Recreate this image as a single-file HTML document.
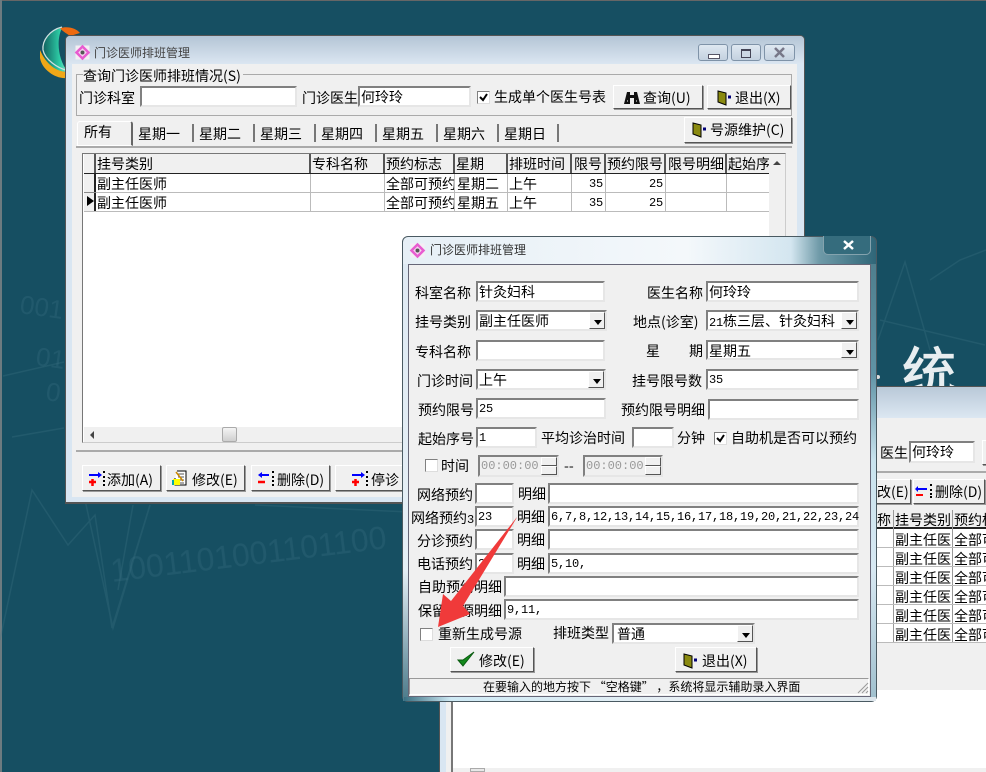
<!DOCTYPE html>
<html><head><meta charset="utf-8"><style>
html,body{margin:0;padding:0}
#r{position:relative;width:986px;height:772px;overflow:hidden;background:#164f62;font:14px/16px "WenQuanYi Zen Hei","Noto Sans CJK SC",sans-serif;color:#000}
#r div,#r svg.a,#r span.t{position:absolute}
.t{white-space:nowrap;font:14px/16px "WenQuanYi Zen Hei","Noto Sans CJK SC",sans-serif}
.m{font:12px/16px "Liberation Mono",monospace;letter-spacing:-.2px}
.i{box-sizing:border-box;background:#fff;border:2px solid;border-color:#808080 #e6e6e6 #e6e6e6 #808080}
.i span{position:absolute;left:1px;top:1px;white-space:nowrap}
.c{position:absolute;right:0;top:0;bottom:0;width:16px;background:#f0f0f0;border:1px solid;border-color:#fff #555 #555 #fff;box-sizing:border-box}
.c:after{content:"";position:absolute;left:4px;top:7px;border:4px solid transparent;border-top:5px solid #000;border-bottom:0}
.b{box-sizing:border-box;background:#f0f0f0;border:1px solid;border-color:#fff #555 #555 #fff;box-shadow:1px 1px 0 #999}
.k{box-sizing:border-box;background:#fff;border:1px solid;border-color:#808080 #ddd #ddd #808080;width:13px;height:13px}
.h{background:#f0f0f0;border-right:2px solid #555;box-sizing:border-box;height:19px;top:154px;overflow:hidden}
</style></head><body><div id="r">
<div style="left:0;top:0;width:986px;height:1px;background:#666"></div>
<div style="left:0;top:0;width:2px;height:772px;background:#6d7b80"></div>

<svg class="a" style="left:0;top:0" width="986" height="772" fill="none">
<defs><linearGradient id="lg" x1="0" x2="1"><stop offset="0" stop-color="#0e5c5c"/><stop offset=".7" stop-color="#2fd0a8"/><stop offset="1" stop-color="#8fe0c8"/></linearGradient></defs>
<g stroke="#3f7486" stroke-width="1.5" opacity=".3">
<path d="M3 376L64 362M12 437L64 428"/>
<path d="M0 640L32 490L68 545L95 515L112 628L150 505"/>
<path d="M85 500L113 628L150 505M133 505L118 590"/>
<path d="M255 505L410 512"/>
<path d="M878 340L905 262L930 350M880 320L985 345M930 280L960 260L986 250"/>
</g>
<g fill="#3f7486" opacity=".3" font-family="Liberation Sans" font-size="26">
<text x="19" y="313" transform="rotate(8 19 313)">001</text>
<text x="35" y="365" transform="rotate(8 35 365)">01</text>
<text x="45" y="400" transform="rotate(8 45 400)">0</text>
<text x="112" y="582" transform="rotate(-7 112 582)" font-size="32">1001101001101100</text>
</g>
<path d="M44 58C38 44 48 30 62 28C56 40 58 60 68 72C56 72 48 66 44 58Z" fill="url(#lg)"/>
<path d="M40 58C42 70 56 79 66 78L68 72C56 72 46 64 40 50Z" fill="#f0a818"/>
<path d="M60 28C68 26 76 28 80 33L70 36C66 33 62 31 60 28Z" fill="#ee6a10"/>
<path d="M62 27C50 30 42 40 43 50C45 60 58 68 66 70" stroke="#cfe0e0" stroke-width="1.3"/>
<circle cx="878" cy="377" r="2" fill="#ddd"/>
<text x="902" y="392" fill="#e8eef0" stroke="#e8eef0" stroke-width="1" font-size="54" font-family="WenQuanYi Zen Hei,Noto Sans CJK SC,sans-serif">统</text>
</svg>

<!-- back window -->
<div style="left:439px;top:386px;width:560px;height:386px;background:#d9e6f2;border-left:1px solid #555;border-top:1px solid #555;box-sizing:border-box"></div>
<div style="left:440px;top:387px;width:546px;height:31px;background:linear-gradient(#b9c9d8,#dce7f2)"></div>
<div style="left:446px;top:418px;width:540px;height:354px;background:#f0f0f0"></div>
<div style="left:451px;top:690px;width:535px;height:82px;background:#fff;border-left:2px solid #777;box-sizing:border-box"></div>
<div style="left:453px;top:768px;width:533px;height:4px;background:#f0f0f0"></div>
<div style="left:470px;top:768px;width:15px;height:4px;background:#e8e8e8;border:1px solid #aaa;box-sizing:border-box"></div>
<span class="t" style="left:880px;top:445px">医生</span>
<div class="i" style="left:909px;top:441px;width:66px;height:22px"><span>何玲玲</span></div>
<div class="b" style="left:982px;top:440px;width:10px;height:25px"></div>
<div style="left:877px;top:471px;width:109px;height:2px;background:#aaa"></div>
<div class="b" style="left:860px;top:479px;width:51px;height:25px"></div>
<span class="t" style="left:877px;top:484px;background:#f0f0f0">改(E)</span>
<div class="b" style="left:913px;top:479px;width:72px;height:25px"></div>
<svg class="a" style="left:915px;top:483px" width="20" height="16"><path d="M2 6H12" stroke="#00f" stroke-width="2"/><path d="M1 12H8" stroke="#f00" stroke-width="2"/><path d="M3 3L0 6L3 9Z" fill="#00f"/><path d="M15 2h2M15 7h2M15 11h2M15 14h2" stroke="#000" stroke-width="2"/></svg>
<span class="t" style="left:935px;top:484px">删除(D)</span>
<div style="left:877px;top:510px;width:109px;height:133px;background:#fff"></div>
<div style="left:877px;top:510px;width:109px;height:19px;background:#f0f0f0;border-bottom:2px solid #222;box-sizing:border-box"></div>
<div style="left:893px;top:510px;width:1px;height:132px;background:#999"></div>
<div style="left:952px;top:510px;width:1px;height:132px;background:#999"></div>
<div style="left:877px;top:547px;width:109px;height:1px;background:#bbb"></div>
<div style="left:877px;top:566px;width:109px;height:1px;background:#bbb"></div>
<div style="left:877px;top:585px;width:109px;height:1px;background:#bbb"></div>
<div style="left:877px;top:604px;width:109px;height:1px;background:#bbb"></div>
<div style="left:877px;top:623px;width:109px;height:1px;background:#bbb"></div>
<div style="left:877px;top:642px;width:109px;height:1px;background:#bbb"></div>
<span class="t" style="left:877px;top:512px">称</span><span class="t" style="left:895px;top:512px">挂号类别</span><span class="t" style="left:954px;top:512px">预约标</span>
<span class="t" style="left:895px;top:532px">副主任医</span><span class="t" style="left:954px;top:532px">全部可</span>
<span class="t" style="left:895px;top:551px">副主任医</span><span class="t" style="left:954px;top:551px">全部可</span>
<span class="t" style="left:895px;top:570px">副主任医</span><span class="t" style="left:954px;top:570px">全部可</span>
<span class="t" style="left:895px;top:589px">副主任医</span><span class="t" style="left:954px;top:589px">全部可</span>
<span class="t" style="left:895px;top:608px">副主任医</span><span class="t" style="left:954px;top:608px">全部可</span>
<span class="t" style="left:895px;top:627px">副主任医</span><span class="t" style="left:954px;top:627px">全部可</span>

<!-- main window -->
<div style="left:65px;top:35px;width:740px;height:469px;background:#d9e6f2;border:1px solid #555;border-bottom-width:2px;border-radius:5px 5px 0 0;box-sizing:border-box"></div>
<div style="left:66px;top:36px;width:738px;height:28px;border-radius:4px 4px 0 0;background:linear-gradient(#b4c5d6,#dbe6f1)"></div>
<div style="left:72px;top:64px;width:725px;height:433px;background:#f0f0f0"></div>
<svg class="a" style="left:74px;top:44px" width="17" height="17"><rect x="1.500" y="1.500" width="14" height="14" fill="#f4eef4"/><rect x="3" y="3" width="11" height="11" transform="rotate(45 8.500 8.500)" fill="#e85cd0"/><rect x="5.500" y="5.500" width="6" height="6" transform="rotate(45 8.500 8.500)" fill="#f6d6f0"/><circle cx="8.500" cy="8.500" r="2" fill="#555"/></svg>
<span class="t" style="left:94px;top:45px;font-size:12px;color:#444">门诊医师排班管理</span>
<div style="left:698px;top:44px;width:30px;height:17px;box-sizing:border-box;border:1px solid #7f93a8;border-radius:3px;background:linear-gradient(#dfe8f1,#c3d1df)"></div>
<div style="left:731px;top:44px;width:30px;height:17px;box-sizing:border-box;border:1px solid #7f93a8;border-radius:3px;background:linear-gradient(#dfe8f1,#c3d1df)"></div>
<div style="left:764px;top:44px;width:31px;height:17px;box-sizing:border-box;border:1px solid #7f93a8;border-radius:3px;background:linear-gradient(#dfe8f1,#c3d1df)"></div>
<div style="left:708px;top:54px;width:10px;height:3px;background:#fff;border:1px solid #556"></div>
<div style="left:741px;top:49px;width:8px;height:6px;background:#cdd8e4;border:1px solid #445;border-top-width:2px"></div>
<svg class="a" style="left:774px;top:47px" width="12" height="11"><path d="M1 1L10 10M10 1L1 10" stroke="#778" stroke-width="2.500"/></svg>

<div style="left:76px;top:74px;width:716px;height:42px;border:1px solid #aaa;box-sizing:border-box"></div>
<span class="t" style="left:83px;top:68px;background:#f0f0f0;padding-right:2px">查询门诊医师排班情况(S)</span>
<span class="t" style="left:79px;top:90px">门诊科室</span>
<div class="i" style="left:140px;top:86px;width:157px;height:21px"></div>
<span class="t" style="left:302px;top:90px">门诊医生</span>
<div class="i" style="left:358px;top:86px;width:113px;height:21px"><span>何玲玲</span></div>
<div class="k" style="left:477px;top:91px"></div>
<svg class="a" style="left:479px;top:93px" width="10" height="10"><path d="M1 4L4 7L8 1" stroke="#000" stroke-width="2" fill="none"/></svg>
<span class="t" style="left:494px;top:89px">生成单个医生号表</span>
<div class="b" style="left:613px;top:85px;width:90px;height:24px"></div>
<svg class="a" style="left:624px;top:91px" width="16" height="14"><path d="M3 1h3v3h4V1h3l3 12H10V7H6v6H0Z" fill="#111"/><path d="M3 10h1M12 10h1" stroke="#fff"/></svg>
<span class="t" style="left:643px;top:90px">查询(U)</span>
<div class="b" style="left:707px;top:85px;width:84px;height:24px"></div>
<svg class="a" style="left:717px;top:90px" width="16" height="16"><path d="M1 1L9 3V15L1 12Z" fill="#8a8a10" stroke="#000"/><path d="M11 7h3" stroke="#007" stroke-width="3"/></svg>
<span class="t" style="left:735px;top:90px">退出(X)</span>

<!-- tabs -->
<div style="left:76px;top:146px;width:716px;height:2px;background:#aaa"></div>
<div style="left:77px;top:121px;width:56px;height:25px;background:#f0f0f0;border:1px solid #fff;border-right:2px solid #666;box-sizing:border-box;border-radius:3px 3px 0 0"></div>
<span class="t" style="left:84px;top:124px">所有</span>
<span class="t" style="left:138px;top:126px">星期一</span><span class="t" style="left:199px;top:126px">星期二</span><span class="t" style="left:260px;top:126px">星期三</span><span class="t" style="left:321px;top:126px">星期四</span><span class="t" style="left:382px;top:126px">星期五</span><span class="t" style="left:443px;top:126px">星期六</span><span class="t" style="left:504px;top:126px">星期日</span>
<div style="left:192px;top:124px;width:2px;height:18px;background:#777"></div><div style="left:253px;top:124px;width:2px;height:18px;background:#777"></div><div style="left:314px;top:124px;width:2px;height:18px;background:#777"></div><div style="left:375px;top:124px;width:2px;height:18px;background:#777"></div><div style="left:436px;top:124px;width:2px;height:18px;background:#777"></div><div style="left:497px;top:124px;width:2px;height:18px;background:#777"></div><div style="left:557px;top:124px;width:2px;height:18px;background:#777"></div>
<div class="b" style="left:684px;top:117px;width:108px;height:26px"></div>
<svg class="a" style="left:692px;top:122px" width="16" height="16"><path d="M1 1L9 3V15L1 12Z" fill="#8a8a10" stroke="#000"/><path d="M11 7h3" stroke="#007" stroke-width="3"/></svg>
<span class="t" style="left:710px;top:122px">号源维护(C)</span>

<!-- grid -->
<div style="left:82px;top:153px;width:704px;height:290px;background:#fff;border:1px solid;border-color:#777 #ccc #ccc #777;box-sizing:border-box"></div>
<div class="h" style="left:84px;width:12px"></div>
<div class="h" style="left:96px;width:215px"><span class="t" style="left:1px;top:2px">挂号类别</span></div>
<div class="h" style="left:311px;width:74px"><span class="t" style="left:1px;top:2px">专科名称</span></div>
<div class="h" style="left:385px;width:70px"><span class="t" style="left:1px;top:2px">预约标志</span></div>
<div class="h" style="left:455px;width:53px"><span class="t" style="left:1px;top:2px">星期</span></div>
<div class="h" style="left:508px;width:64px"><span class="t" style="left:1px;top:2px">排班时间</span></div>
<div class="h" style="left:572px;width:34px"><span class="t" style="left:2px;top:2px">限号</span></div>
<div class="h" style="left:606px;width:60px"><span class="t" style="left:1px;top:2px">预约限号</span></div>
<div class="h" style="left:666px;width:61px"><span class="t" style="left:2px;top:2px">限号明细</span></div>
<div class="h" style="left:727px;width:42px;border-right:0"><span class="t" style="left:1px;top:2px">起始序</span></div>
<div style="left:84px;top:173px;width:685px;height:1px;background:#222"></div>
<div style="left:84px;top:174px;width:12px;height:37px;background:#f0f0f0;border-right:2px solid #222;box-sizing:border-box"></div>
<div style="left:84px;top:192px;width:12px;height:1px;background:#888"></div>
<div style="left:87px;top:196px;border:5px solid transparent;border-left:7px solid #000;border-right:0"></div>
<div style="left:96px;top:192px;width:673px;height:1px;background:#bbb"></div>
<div style="left:84px;top:211px;width:685px;height:1px;background:#bbb"></div>
<div style="left:310px;top:174px;width:1px;height:37px;background:#bbb"></div><div style="left:384px;top:174px;width:1px;height:37px;background:#bbb"></div><div style="left:454px;top:174px;width:1px;height:37px;background:#bbb"></div><div style="left:507px;top:174px;width:1px;height:37px;background:#bbb"></div><div style="left:571px;top:174px;width:1px;height:37px;background:#bbb"></div><div style="left:605px;top:174px;width:1px;height:37px;background:#bbb"></div><div style="left:665px;top:174px;width:1px;height:37px;background:#bbb"></div><div style="left:726px;top:174px;width:1px;height:37px;background:#bbb"></div>
<span class="t" style="left:97px;top:176px">副主任医师</span><span class="t" style="left:386px;top:176px;width:68px;overflow:hidden">全部可预约</span><span class="t" style="left:457px;top:176px">星期二</span><span class="t" style="left:509px;top:176px">上午</span><span class="t m" style="left:589px;top:176px">35</span><span class="t m" style="left:649px;top:176px">25</span>
<span class="t" style="left:97px;top:195px">副主任医师</span><span class="t" style="left:386px;top:195px;width:68px;overflow:hidden">全部可预约</span><span class="t" style="left:457px;top:195px">星期五</span><span class="t" style="left:509px;top:195px">上午</span><span class="t m" style="left:589px;top:195px">35</span><span class="t m" style="left:649px;top:195px">25</span>
<div style="left:769px;top:154px;width:16px;height:288px;background:#f0f0f0"></div>
<div style="left:773px;top:161px;border:4px solid transparent;border-bottom:4px solid #444;border-top:0"></div>
<div style="left:84px;top:427px;width:700px;height:15px;background:#f0f0f0"></div>
<div style="left:90px;top:431px;border:4px solid transparent;border-right:4px solid #444;border-left:0"></div>
<div style="left:222px;top:427px;width:15px;height:15px;box-sizing:border-box;border:1px solid #aaa;border-radius:2px;background:linear-gradient(#f4f4f4,#cfcfcf)"></div>
<div style="left:76px;top:450px;width:716px;height:2px;background:#aaa"></div>

<!-- toolbar -->
<div class="b" style="left:82px;top:465px;width:79px;height:26px"></div>
<svg class="a" style="left:88px;top:471px" width="18" height="16"><path d="M1 4H12" stroke="#00f" stroke-width="2"/><path d="M10 1L14 4L10 7Z" fill="#00f"/><path d="M1 11H8M4.500 8V15" stroke="#f00" stroke-width="2.500"/><path d="M15 1h2M15 6h2M15 10h2M15 14h2" stroke="#000" stroke-width="2"/></svg>
<span class="t" style="left:107px;top:472px">添加(A)</span>
<div class="b" style="left:166px;top:465px;width:79px;height:26px"></div>
<svg class="a" style="left:172px;top:470px" width="17" height="17"><path d="M5 1H14V15H3V8" fill="#fff" stroke="#000"/><path d="M6 4h6M6 7h6M6 10h6M6 13h6" stroke="#555"/><path d="M1 9h7v6H1Z" fill="#ff0"/><path d="M1 10v5" stroke="#0aa" stroke-width="2"/><path d="M4 2L11 11" stroke="#c80" stroke-width="1.500"/></svg>
<span class="t" style="left:192px;top:472px">修改(E)</span>
<div class="b" style="left:251px;top:465px;width:79px;height:26px"></div>
<svg class="a" style="left:257px;top:471px" width="18" height="16"><path d="M3 4H12" stroke="#00f" stroke-width="2"/><path d="M5 1L1 4L5 7Z" fill="#00f"/><path d="M1 11H8" stroke="#f00" stroke-width="2.500"/><path d="M15 1h2M15 6h2M15 10h2M15 14h2" stroke="#000" stroke-width="2"/></svg>
<span class="t" style="left:277px;top:472px">删除(D)</span>
<div class="b" style="left:335px;top:465px;width:79px;height:26px"></div>
<svg class="a" style="left:351px;top:471px" width="18" height="16"><path d="M1 4H12" stroke="#00f" stroke-width="2"/><path d="M10 1L14 4L10 7Z" fill="#00f"/><path d="M1 11H8M4.500 8V15" stroke="#f00" stroke-width="2.500"/><path d="M15 1h2M15 6h2M15 10h2M15 14h2" stroke="#000" stroke-width="2"/></svg>
<span class="t" style="left:371px;top:472px">停诊</span>

<!-- dialog -->
<div style="left:402px;top:236px;width:475px;height:466px;border:1px solid #4a5a62;border-radius:6px;box-sizing:border-box;background:linear-gradient(90deg,#e6eff6 0,#f4f8fb 60%,#d4e6f0 82%,#6f9aa8 88%,#2f6678 100%)"></div>
<div style="left:408px;top:264px;width:463px;height:433px;background:#f0f0f0;border:1px solid #667;box-sizing:border-box"></div>
<div style="left:871px;top:264px;width:5px;height:437px;background:linear-gradient(#4f7f8e,#5f93a5 25%,#c9e3ee 45%,#d7e8f2 70%,#9fbfcd)"></div>
<div style="left:403px;top:264px;width:5px;height:437px;background:linear-gradient(#dfeaf3,#e6eff6 70%,#4a7a8a)"></div>
<div style="left:404px;top:697px;width:472px;height:4px;background:linear-gradient(90deg,#3a7082,#cfeaf5 10%,#e8eff4 60%,#dde6ec)"></div>
<div style="left:823px;top:236px;width:48px;height:19px;box-sizing:border-box;border:1px solid #84a3ae;border-top:0;border-radius:0 0 5px 5px;background:#356c7d"></div>
<svg class="a" style="left:843px;top:240px" width="12" height="11"><path d="M1 1L10 9M10 1L1 9" stroke="#fff" stroke-width="2.500"/></svg>
<svg class="a" style="left:409px;top:242px" width="17" height="17"><rect x="1.500" y="1.500" width="14" height="14" fill="#f4eef4"/><rect x="3" y="3" width="11" height="11" transform="rotate(45 8.500 8.500)" fill="#e85cd0"/><rect x="5.500" y="5.500" width="6" height="6" transform="rotate(45 8.500 8.500)" fill="#f6d6f0"/><circle cx="8.500" cy="8.500" r="2" fill="#555"/></svg>
<span class="t" style="left:430px;top:242px;font-size:12px;color:#333">门诊医师排班管理</span>

<span class="t" style="left:415px;top:285px">科室名称</span><div class="i" style="left:476px;top:281px;width:129px;height:21px"><span>针灸妇科</span></div>
<span class="t" style="left:647px;top:285px">医生名称</span><div class="i" style="left:706px;top:281px;width:153px;height:21px"><span>何玲玲</span></div>
<span class="t" style="left:415px;top:314px">挂号类别</span><div class="i" style="left:476px;top:310px;width:131px;height:21px"><span>副主任医师</span><i class="c"></i></div>
<span class="t" style="left:633px;top:314px">地点(诊室)</span><div class="i" style="left:706px;top:310px;width:153px;height:21px"><span><b class="m" style="font-weight:400">21</b>栋三层、针灸妇科</span><i class="c"></i></div>
<span class="t" style="left:415px;top:344px">专科名称</span><div class="i" style="left:476px;top:340px;width:129px;height:21px"></div>
<span class="t" style="left:646px;top:343px">星</span><span class="t" style="left:689px;top:343px">期</span><div class="i" style="left:706px;top:340px;width:153px;height:20px"><span>星期五</span><i class="c"></i></div>
<span class="t" style="left:417px;top:373px">门诊时间</span><div class="i" style="left:476px;top:369px;width:130px;height:21px"><span>上午</span><i class="c"></i></div>
<span class="t" style="left:632px;top:373px">挂号限号数</span><div class="i" style="left:706px;top:369px;width:153px;height:21px"><span class="m">35</span></div>
<span class="t" style="left:418px;top:402px">预约限号</span><div class="i" style="left:476px;top:398px;width:130px;height:21px"><span class="m">25</span></div>
<span class="t" style="left:621px;top:402px">预约限号明细</span><div class="i" style="left:708px;top:399px;width:151px;height:21px"></div>
<span class="t" style="left:418px;top:431px">起始序号</span><div class="i" style="left:476px;top:427px;width:61px;height:21px"><span class="m">1</span></div>
<span class="t" style="left:541px;top:430px">平均诊治时间</span><div class="i" style="left:632px;top:427px;width:42px;height:21px"></div>
<span class="t" style="left:677px;top:430px">分钟</span>
<div class="k" style="left:714px;top:432px"></div>
<svg class="a" style="left:716px;top:434px" width="10" height="10"><path d="M1 4L4 7L8 1" stroke="#000" stroke-width="2" fill="none"/></svg>
<span class="t" style="left:731px;top:430px">自助机是否可以预约</span>

<div class="k" style="left:425px;top:459px"></div><span class="t" style="left:441px;top:458px">时间</span>
<div class="i" style="left:478px;top:455px;width:81px;height:22px;background:#f0f0f0"><span class="m" style="color:#999;letter-spacing:0">00:00:00</span></div>
<div class="b" style="left:541px;top:457px;width:16px;height:9px;box-shadow:none"></div><div class="b" style="left:541px;top:466px;width:16px;height:9px;box-shadow:none"></div>
<span class="t" style="left:564px;top:458px">--</span>
<div class="i" style="left:583px;top:455px;width:80px;height:22px;background:#f0f0f0"><span class="m" style="color:#999;letter-spacing:0">00:00:00</span></div>
<div class="b" style="left:645px;top:457px;width:16px;height:9px;box-shadow:none"></div><div class="b" style="left:645px;top:466px;width:16px;height:9px;box-shadow:none"></div>

<span class="t" style="left:417px;top:487px">网络预约</span><div class="i" style="left:475px;top:483px;width:39px;height:21px"></div>
<span class="t" style="left:518px;top:486px">明细</span><div class="i" style="left:548px;top:483px;width:311px;height:21px"></div>
<span class="t" style="left:411px;top:510px">网络预约<b class="m" style="font-weight:400">3</b></span><div class="i" style="left:475px;top:506px;width:39px;height:21px"><span class="m">23</span></div>
<span class="t" style="left:517px;top:509px">明细</span><div class="i" style="left:548px;top:506px;width:311px;height:21px"><span class="m" style="letter-spacing:-.2px">6,7,8,12,13,14,15,16,17,18,19,20,21,22,23,24</span></div>
<span class="t" style="left:417px;top:533px">分诊预约</span><div class="i" style="left:475px;top:529px;width:39px;height:21px"></div>
<span class="t" style="left:517px;top:532px">明细</span><div class="i" style="left:548px;top:529px;width:311px;height:21px"></div>
<span class="t" style="left:417px;top:556px">电话预约</span><div class="i" style="left:475px;top:553px;width:39px;height:21px"><span class="m">2</span></div>
<span class="t" style="left:517px;top:556px">明细</span><div class="i" style="left:548px;top:553px;width:311px;height:21px"><span class="m">5,10,</span></div>
<span class="t" style="left:418px;top:579px">自助预约明细</span><div class="i" style="left:504px;top:576px;width:355px;height:21px"></div>
<span class="t" style="left:418px;top:603px">保留号源明细</span><div class="i" style="left:504px;top:599px;width:355px;height:21px"><span class="m">9,11,</span></div>
<div class="k" style="left:420px;top:628px"></div>
<span class="t" style="left:438px;top:626px">重新生成号源</span>
<span class="t" style="left:553px;top:625px">排班类型</span>
<div class="i" style="left:612px;top:623px;width:143px;height:21px"><span style="left:3px">普通</span><i class="c"></i></div>
<div class="b" style="left:450px;top:647px;width:84px;height:25px"></div>
<svg class="a" style="left:456px;top:650px" width="20" height="18"><path d="M2 10L7 16L18 2L7 10Z" fill="#138a1c" stroke="#0a5a10"/></svg>
<span class="t" style="left:479px;top:653px">修改(E)</span>
<div class="b" style="left:675px;top:647px;width:82px;height:25px"></div>
<svg class="a" style="left:683px;top:653px" width="16" height="16"><path d="M1 1L9 3V15L1 12Z" fill="#8a8a10" stroke="#000"/><path d="M11 7h3" stroke="#007" stroke-width="3"/></svg>
<span class="t" style="left:702px;top:653px">退出(X)</span>
<div style="left:409px;top:678px;width:460px;height:17px;border:1px solid;border-color:#999 #fff #fff #999;box-sizing:border-box"></div>
<span class="t" style="left:483px;top:679px;font-size:12px">在要输入的地方按下 “空格键” ，系统将显示辅助录入界面</span>
<svg class="a" style="left:857px;top:682px" width="12" height="12"><path d="M11 1L1 11M11 5L5 11M11 9L9 11" stroke="#999"/></svg>

<!-- arrow -->
<svg class="a" style="left:0;top:0" width="986" height="772"><path d="M517 517L516 519L463 606L470 614L438 627L443 594L451 601Z" fill="#f03a3a"/></svg>
</div></body></html>
